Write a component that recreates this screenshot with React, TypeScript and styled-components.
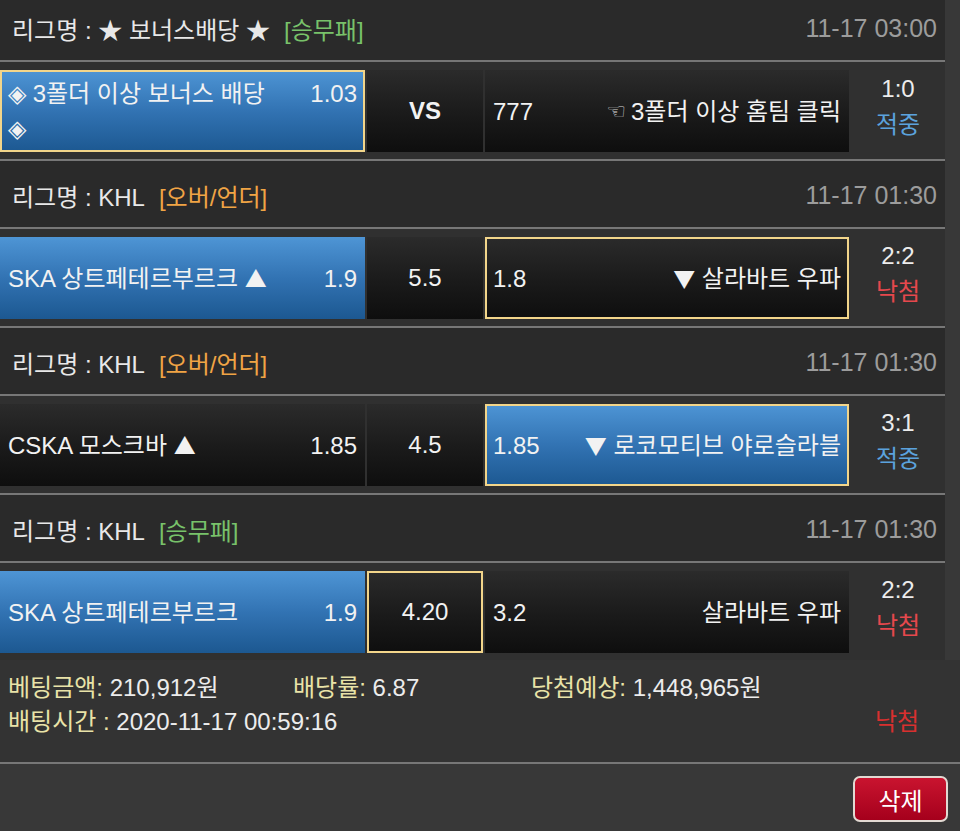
import React from 'react';
import styled, { createGlobalStyle } from 'styled-components';

const GlobalStyle = createGlobalStyle`
  html, body {
    margin: 0;
    padding: 0;
    background: #383838;
  }
  body {
    font-family: "Liberation Sans", "Noto Sans CJK KR", sans-serif;
    color: #ececec;
    overflow: hidden;
  }
`;

const Page = styled.div`
  width: 960px;
  height: 831px;
  overflow: hidden;
  background: #383838;
`;

const List = styled.div`
  width: 945px;
  margin-top: -6px;
  background: #303030;
`;

const LeagueHeader = styled.div`
  height: 68px;
  box-sizing: border-box;
  display: flex;
  align-items: center;
  justify-content: space-between;
  padding: 2px 8px 0 12px;
  background: #2a2a2a;
  border-bottom: 2px solid #777;
  font-size: 24px;
`;

const LeagueName = styled.div`
  display: flex;
  align-items: center;
  gap: 14px;
  color: #e8e8e8;
`;

const Tag = styled.span<{ $kind: 'win' | 'ou' }>`
  color: ${(p) => (p.$kind === 'win' ? '#78c26a' : '#f0a445')};
`;

const GameTime = styled.span`
  color: #9c9c9c;
  font-size: 25px;
`;

const MatchRow = styled.div<{ $last?: boolean }>`
  display: grid;
  grid-template-columns: 365px 116px 364px 1fr;
  column-gap: 2px;
  padding: 8px 0 7px;
  background: #303030;
  border-bottom: ${(p) => (p.$last ? 'none' : '2px solid #777')};
`;

const Cell = styled.div<{ $blue?: boolean; $picked?: boolean }>`
  height: 82px;
  box-sizing: border-box;
  display: flex;
  align-items: center;
  padding: 0 6px;
  border: 2px solid ${(p) => (p.$picked ? '#f2d58a' : 'transparent')};
  background: ${(p) =>
    p.$blue
      ? 'linear-gradient(180deg, #4e95d5 0%, #3273b3 50%, #1c5891 100%)'
      : 'linear-gradient(180deg, #2b2b2b 0%, #1a1a1a 55%, #0e0e0e 100%)'};
  background-origin: border-box;
  font-size: 24px;
  color: #f2f2f2;
`;

const CellLine = styled.div`
  display: flex;
  align-items: baseline;
  justify-content: space-between;
  gap: 14px;
  width: 100%;
  line-height: 35px;
`;

const TeamName = styled.span<{ $right?: boolean }>`
  flex: 1;
  text-align: ${(p) => (p.$right ? 'right' : 'left')};
`;

const Arrow = styled.span`
  font-family: "Noto Sans CJK KR", sans-serif;
  font-size: 22px;
`;

const Odds = styled.span`
  white-space: nowrap;
`;

const Center = styled(Cell)`
  justify-content: center;
`;

const VsMark = styled.span`
  font-weight: bold;
`;

const Hand = styled.span`
  font-family: "DejaVu Sans", sans-serif;
  font-size: 22px;
  color: #d6d6d6;
  margin-right: 5px;
  vertical-align: 1px;
`;

const Result = styled.div`
  display: flex;
  flex-direction: column;
  align-items: center;
  justify-content: center;
  padding-bottom: 9px;
  font-size: 24px;
  line-height: 34px;
  gap: 2px;
`;

const Status = styled.span<{ $win: boolean }>`
  color: ${(p) => (p.$win ? '#5ba2dd' : '#e6484d')};
`;

const Info = styled.div`
  padding: 11px 15px 23px 8px;
  background: #333;
  font-size: 24px;
  line-height: 34px;
`;

const InfoGrid = styled.div`
  display: grid;
  grid-template-columns: 285px 238px auto;
`;

const InfoLine = styled.div`
  display: flex;
  justify-content: space-between;
`;

const Label = styled.span`
  color: #e9e3a8;
`;

const LostMark = styled.span`
  width: 96px;
  text-align: center;
  color: #d8302f;
`;

const BottomBar = styled.div`
  display: flex;
  justify-content: flex-end;
  padding: 12px 12px 0;
  border-top: 2px solid #777;
`;

const DeleteButton = styled.button`
  width: 95px;
  height: 46px;
  border: 2px solid #e2d9d2;
  border-radius: 7px;
  background: linear-gradient(180deg, #c9142f 0%, #a5001c 100%);
  color: #fff;
  font-family: "Liberation Sans", "Noto Sans CJK KR", sans-serif;
  font-size: 24px;
  cursor: pointer;
`;

type Pick = 'home' | 'mid' | 'away';

interface Game {
  league: string;
  tag: string;
  tagKind: 'win' | 'ou';
  time: string;
  home: React.ReactNode;
  homeOdds: string;
  mid: string;
  awayOdds: string;
  away: React.ReactNode;
  blue: Pick;
  picked: Pick;
  score: string;
  win: boolean;
}

const games: Game[] = [
  {
    league: '★ 보너스배당 ★',
    tag: '[승무패]',
    tagKind: 'win',
    time: '11-17 03:00',
    home: (
      <>
        ◈ 3폴더 이상 보너스 배당
        <br />◈
      </>
    ),
    homeOdds: '1.03',
    mid: 'VS',
    awayOdds: '777',
    away: (
      <>
        <Hand>☜</Hand>3폴더 이상 홈팀 클릭
      </>
    ),
    blue: 'home',
    picked: 'home',
    score: '1:0',
    win: true,
  },
  {
    league: 'KHL',
    tag: '[오버/언더]',
    tagKind: 'ou',
    time: '11-17 01:30',
    home: (
      <>
        SKA 상트페테르부르크 <Arrow>▲</Arrow>
      </>
    ),
    homeOdds: '1.9',
    mid: '5.5',
    awayOdds: '1.8',
    away: (
      <>
        <Arrow>▼</Arrow> 살라바트 우파
      </>
    ),
    blue: 'home',
    picked: 'away',
    score: '2:2',
    win: false,
  },
  {
    league: 'KHL',
    tag: '[오버/언더]',
    tagKind: 'ou',
    time: '11-17 01:30',
    home: (
      <>
        CSKA 모스크바 <Arrow>▲</Arrow>
      </>
    ),
    homeOdds: '1.85',
    mid: '4.5',
    awayOdds: '1.85',
    away: (
      <>
        <Arrow>▼</Arrow> 로코모티브 야로슬라블
      </>
    ),
    blue: 'away',
    picked: 'away',
    score: '3:1',
    win: true,
  },
  {
    league: 'KHL',
    tag: '[승무패]',
    tagKind: 'win',
    time: '11-17 01:30',
    home: 'SKA 상트페테르부르크',
    homeOdds: '1.9',
    mid: '4.20',
    awayOdds: '3.2',
    away: '살라바트 우파',
    blue: 'home',
    picked: 'mid',
    score: '2:2',
    win: false,
  },
];

const App: React.FC = () => {
  return (
    <Page>
      <GlobalStyle />
      <List>
        {games.map((g, i) => (
          <React.Fragment key={i}>
            <LeagueHeader>
              <LeagueName>
                <span>리그명 : {g.league}</span>
                <Tag $kind={g.tagKind}>{g.tag}</Tag>
              </LeagueName>
              <GameTime>{g.time}</GameTime>
            </LeagueHeader>
            <MatchRow $last={i === games.length - 1}>
              <Cell $blue={g.blue === 'home'} $picked={g.picked === 'home'}>
                <CellLine>
                  <TeamName>{g.home}</TeamName>
                  <Odds>{g.homeOdds}</Odds>
                </CellLine>
              </Cell>
              <Center $blue={g.blue === 'mid'} $picked={g.picked === 'mid'}>
                {g.mid === 'VS' ? <VsMark>VS</VsMark> : g.mid}
              </Center>
              <Cell $blue={g.blue === 'away'} $picked={g.picked === 'away'}>
                <CellLine>
                  <Odds>{g.awayOdds}</Odds>
                  <TeamName $right>{g.away}</TeamName>
                </CellLine>
              </Cell>
              <Result>
                <span>{g.score}</span>
                <Status $win={g.win}>{g.win ? '적중' : '낙첨'}</Status>
              </Result>
            </MatchRow>
          </React.Fragment>
        ))}
      </List>
      <Info>
        <InfoGrid>
          <span>
            <Label>베팅금액:</Label> 210,912원
          </span>
          <span>
            <Label>배당률:</Label> 6.87
          </span>
          <span>
            <Label>당첨예상:</Label> 1,448,965원
          </span>
        </InfoGrid>
        <InfoLine>
          <span>
            <Label>배팅시간 :</Label> 2020-11-17 00:59:16
          </span>
          <LostMark>낙첨</LostMark>
        </InfoLine>
      </Info>
      <BottomBar>
        <DeleteButton>삭제</DeleteButton>
      </BottomBar>
    </Page>
  );
};

export default App;
